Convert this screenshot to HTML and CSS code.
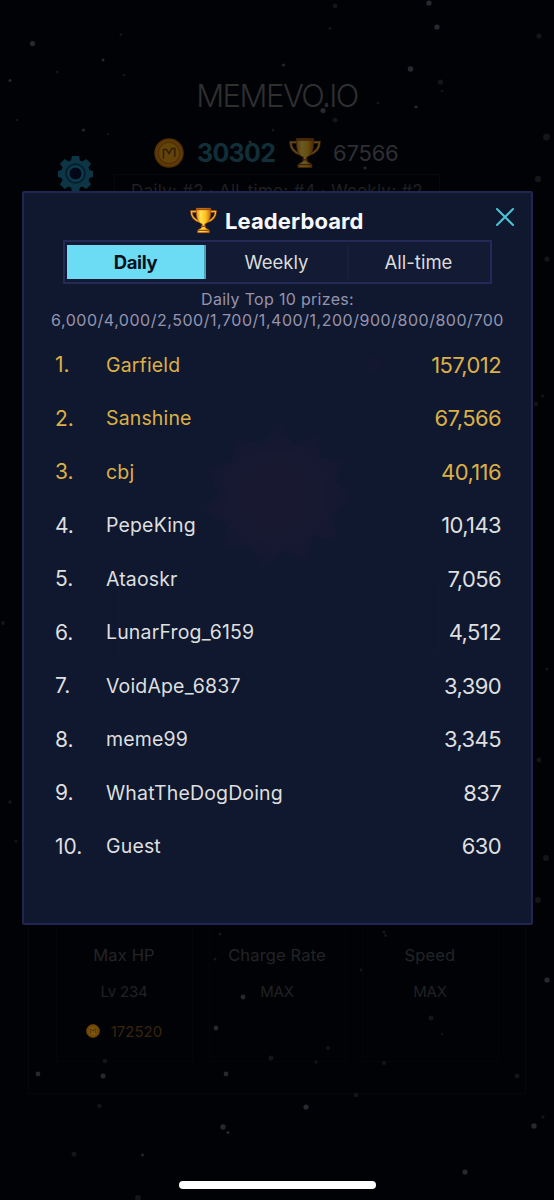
FILE: index.html
```html
<!DOCTYPE html>
<html lang="en">
<head>
<meta charset="utf-8">
<title>MEMEVO.IO</title>
<link rel="stylesheet" href="styles.css">
</head>
<body>
<svg class="symbols" width="0" height="0" aria-hidden="true">
  <defs>
    <linearGradient id="gold" x1="0" x2="1" y1="0" y2="0">
      <stop offset="0" stop-color="#e88a10"/><stop offset=".3" stop-color="#ffe052"/><stop offset=".65" stop-color="#ffc21f"/><stop offset="1" stop-color="#c96508"/>
    </linearGradient>
    <radialGradient id="glow">
      <stop offset="0" stop-color="#191830"/><stop offset=".6" stop-color="#171831"/><stop offset="1" stop-color="#121830"/>
    </radialGradient>
    <symbol id="trophy" viewBox="0 0 30 30">
      <path d="M7 5H1.500C1.500 11 5 14.500 11 16.500M23 5h5.500C28.500 11 25 14.500 19 16.500" fill="none" stroke="#8a3c08" stroke-width="2.800"/>
      <path d="M7 5H1.500C1.500 11 5 14.500 11 16.500M23 5h5.500C28.500 11 25 14.500 19 16.500" fill="none" stroke="#f2b632" stroke-width="1.400"/>
      <path d="M7 1.500h16c0 9-.5 15-6.500 17.500v3c.5 2 4 2.500 5 4v2.500h-13V26c1-1.500 4.500-2 5-4v-3C7.500 16.500 7 10.500 7 1.500z" fill="url(#gold)" stroke="#b65a0a" stroke-width=".8"/>
      <path d="M7.500 2h15v1.500h-15z" fill="#a34b10"/>
      <path d="M12 21.500h6M9 26h12" stroke="#a34b10" stroke-width="1.200"/>
    </symbol>
    <symbol id="coin" viewBox="0 0 30 30">
      <circle cx="15" cy="15" r="14" fill="#f2950a" stroke="#c87408" stroke-width="1.500"/>
      <circle cx="15" cy="15" r="10.800" fill="#f4a812" stroke="#c46c05" stroke-width="1.200"/>
      <path d="M9.500 20.500v-9h3l2.500 4 3-5h2.800v8.500" fill="none" stroke="#824507" stroke-width="1.500"/>
    </symbol>
  </defs>
</svg>
<div class="screen">
  <main class="game">
    <h1 class="logo">MEMEVO.IO</h1>
    <div class="wallet">
      <svg class="wallet-icon"><use href="#coin"/></svg>
      <span class="coins">30302</span>
      <svg class="wallet-icon cup"><use href="#trophy"/></svg>
      <span class="points">67566</span>
    </div>
    <div class="ranks">Daily: #2 · All-time: #4 · Weekly: #2</div>
    <section class="upgrades">
      <div class="upgrade"><h2>Max HP</h2><p>Lv 234</p><div class="price"><svg class="price-icon"><use href="#coin"/></svg><span>172520</span></div></div>
      <div class="upgrade"><h2>Charge Rate</h2><p>MAX</p></div>
      <div class="upgrade"><h2>Speed</h2><p>MAX</p></div>
    </section>
  </main>

  <svg class="gear" viewBox="0 0 36 36" aria-label="Settings">
    <path d="M14.500 1h7l.8 4.400 2.500 1 3.700-2.600 4.700 4.700-2.600 3.700 1 2.500 3.400.8v6l-3.400.8-1 2.500 2.600 3.700-4.700 4.700-3.700-2.600-2.500 1-.8 3.900h-7l-.8-3.900-2.500-1-3.700 2.600-4.700-4.700 2.600-3.700-1-2.500L1 21.500v-6l3.400-.8 1-2.500-2.600-3.700 4.700-4.700 3.700 2.600 2.500-1z" fill="#0c3645"/>
    <circle cx="18" cy="18" r="9.300" fill="#0b3040" stroke="#071c2c" stroke-width="1.500"/>
    <circle cx="18" cy="18" r="6.800" fill="#020818" stroke="#0d3c4f" stroke-width="1.800"/>
  </svg>

  <svg class="stars" viewBox="0 0 554 1200" aria-hidden="true">
    <g fill="#27292e">
      <circle cx="32.500" cy="43.500" r="2.600"/><circle cx="410.500" cy="69" r="2.800"/><circle cx="437" cy="27" r="2.600"/><circle cx="429" cy="3" r="2.600"/><circle cx="323" cy="110.500" r="2.600"/><circle cx="547" cy="980" r="2.600"/><circle cx="223" cy="1127" r="2.700"/><circle cx="306" cy="1107" r="2.600"/><circle cx="534" cy="1126" r="2.700"/><circle cx="465" cy="1172" r="2.600"/><circle cx="38" cy="1074" r="2.400"/><circle cx="103" cy="1076" r="2.500"/><circle cx="226" cy="1074" r="2.400"/><circle cx="216" cy="1028" r="2.400"/><circle cx="243" cy="997" r="2.400"/>
      <circle cx="10" cy="80.500" r="1.500"/><circle cx="103" cy="60" r="1.500"/><circle cx="83.500" cy="130" r="1.500"/><circle cx="283.500" cy="65" r="1.500"/><circle cx="416" cy="107" r="1.600"/><circle cx="326.500" cy="104" r="1.500"/><circle cx="250" cy="142" r="1.500"/><circle cx="365" cy="168" r="1.500"/><circle cx="228" cy="1132.500" r="1.500"/><circle cx="142.500" cy="1155" r="1.400"/>
    </g>
    <g fill="#131519">
      <circle cx="57" cy="72" r="1.500"/><circle cx="124" cy="75" r="1.500"/><circle cx="121" cy="34.500" r="1.500"/><circle cx="330" cy="28.500" r="1.500"/><circle cx="335" cy="6" r="2.400"/><circle cx="440.500" cy="82" r="2.600"/><circle cx="442" cy="91" r="1.300"/><circle cx="378" cy="103" r="1.500"/><circle cx="335" cy="120" r="2.500"/><circle cx="273" cy="130" r="1.500"/><circle cx="539" cy="36" r="2.600"/><circle cx="546.500" cy="137" r="3.500"/><circle cx="538" cy="179" r="3.200"/><circle cx="547" cy="259" r="2.600"/><circle cx="108" cy="134" r="1.300"/><circle cx="17" cy="120" r="1.300"/><circle cx="542.500" cy="396" r="1.600"/><circle cx="536" cy="404" r="2"/><circle cx="3" cy="623" r="2"/><circle cx="547" cy="669" r="1.600"/><circle cx="539" cy="760" r="2.400"/><circle cx="546" cy="858" r="3"/><circle cx="538" cy="900" r="3"/><circle cx="10" cy="802" r="1.800"/><circle cx="16" cy="841" r="1.500"/><circle cx="384" cy="932" r="1.600"/><circle cx="385.500" cy="935.500" r="1.500"/><circle cx="220" cy="934" r="1.600"/><circle cx="215" cy="959" r="1.500"/><circle cx="361" cy="970" r="1.400"/><circle cx="431" cy="1018" r="2.500"/><circle cx="442" cy="1034" r="1.200"/><circle cx="328" cy="1048" r="1.900"/><circle cx="316" cy="1062" r="1.700"/><circle cx="384" cy="1063" r="2"/><circle cx="271" cy="1058" r="2.500"/><circle cx="105" cy="1061" r="2.300"/><circle cx="517" cy="1076" r="2.500"/><circle cx="356" cy="1095" r="2.300"/><circle cx="99.500" cy="1106" r="2.300"/><circle cx="74" cy="1154" r="2.500"/><circle cx="543" cy="1117" r="1.700"/><circle cx="138" cy="1198" r="3"/>
    </g>
  </svg>

  <section class="modal" role="dialog" aria-label="Leaderboard">
    <svg class="backdrop" viewBox="0 0 509 731" aria-hidden="true">
      <path d="M257 232l12 20 25-10 2 22 28 3-14 20 19 19-21 14 6 28-26-5-5 27-23-12-20 18-14-23-26 4 3-26-26-12 18-19-13-24 26-7 5-23 24 5z" fill="url(#glow)"/>
      <circle cx="350" cy="172" r="9" fill="#131830"/>
      <path d="M95 388h320v75H95z" fill="none" stroke="#131b33"/>
    </svg>
    <header class="modal-head">
      <svg class="trophy"><use href="#trophy"/></svg>
      <h2 class="title">Leaderboard</h2>
      <svg class="close" viewBox="0 0 20 20" aria-label="Close"><path d="M2 2l16 16M18 2L2 18"/></svg>
    </header>
    <nav class="tabs">
      <span class="tab active">Daily</span><span class="tab">Weekly</span><span class="tab">All-time</span>
    </nav>
    <p class="prizes"><span class="prize-title">Daily Top 10 prizes:</span><span class="prize-list">6,000/4,000/2,500/1,700/1,400/1,200/900/800/800/700</span></p>
    <div class="board">
      <div class="row top"><span class="rank">1.</span><span class="name">Garfield</span><span class="score">157,012</span></div>
      <div class="row top"><span class="rank">2.</span><span class="name">Sanshine</span><span class="score">67,566</span></div>
      <div class="row top"><span class="rank">3.</span><span class="name">cbj</span><span class="score">40,116</span></div>
      <div class="row"><span class="rank">4.</span><span class="name">PepeKing</span><span class="score">10,143</span></div>
      <div class="row"><span class="rank">5.</span><span class="name">Ataoskr</span><span class="score">7,056</span></div>
      <div class="row"><span class="rank">6.</span><span class="name">LunarFrog_6159</span><span class="score">4,512</span></div>
      <div class="row"><span class="rank">7.</span><span class="name">VoidApe_6837</span><span class="score">3,390</span></div>
      <div class="row"><span class="rank">8.</span><span class="name">meme99</span><span class="score">3,345</span></div>
      <div class="row"><span class="rank">9.</span><span class="name">WhatTheDogDoing</span><span class="score">837</span></div>
      <div class="row"><span class="rank">10.</span><span class="name">Guest</span><span class="score">630</span></div>
    </div>
  </section>
  <div class="home-bar"></div>
</div>
</body>
</html>
```
FILE: styles.css
```css
* { box-sizing: border-box; }
body { margin: 0; background: #010206; font-family: Inter, "Liberation Sans", sans-serif; }
h1, h2, p { margin: 0; font-weight: 400; }
.symbols { position: absolute; }
.screen { position: relative; width: 554px; height: 1200px; overflow: hidden; background: #010206; }
.game { display: flex; flex-direction: column; align-items: center; height: 1200px; padding-top: 76px; }
.logo { height: 40px; line-height: 40px; font-size: 31px; font-weight: 300; color: #2f2f30; letter-spacing: -1.5px; }
.wallet { display: flex; align-items: center; height: 36px; margin-top: 19px; }
.wallet-icon { width: 30px; height: 32px; opacity: .4; }
.wallet-icon.cup { width: 32px; margin-left: 13px; }
.coins { width: 79px; margin-left: 13px; font-size: 25px; font-weight: 700; color: #112f39; letter-spacing: -.7px; }
.points { width: 67px; margin-left: 12px; font-size: 22px; color: #2e2f34; letter-spacing: -.2px; }
.ranks { width: 326px; height: 42px; margin-top: 3px; border: 1px solid #06080e; line-height: 32px; text-align: center; font-size: 17px; color: #1f2023; letter-spacing: .25px; white-space: nowrap; }
.upgrades { display: flex; gap: 16px; justify-content: center; width: 498px; height: 394px; margin-top: 484px; padding-top: 225px; border: 1px solid #05070c; }
.upgrade { display: flex; flex-direction: column; align-items: center; width: 137px; height: 136px; padding-top: 17px; border: 1px solid #030509; border-top: 0; }
.upgrade h2 { height: 24px; line-height: 24px; font-size: 16.500px; color: #232427; letter-spacing: .15px; white-space: nowrap; }
.upgrade p { height: 20px; margin-top: 15px; line-height: 20px; font-size: 15px; color: #202124; letter-spacing: -.2px; }
.price { display: flex; align-items: center; gap: 11px; height: 20px; margin-top: 19px; color: #38250b; font-size: 15px; }
.price-icon { width: 14px; height: 14px; opacity: .5; }
.gear { position: absolute; left: 57px; top: 155px; width: 37px; height: 37px; }
.stars { position: absolute; inset: 0; width: 554px; height: 1200px; }
.modal { position: absolute; left: 22px; top: 191px; width: 511px; height: 734px; border: 2px solid #20264f; border-radius: 2px; background: #10182f; }
.backdrop { position: absolute; left: 0; top: 0; width: 509px; height: 731px; }
.modal-head { position: relative; display: flex; align-items: center; height: 47px; padding: 7px 16px 0 166px; }
.trophy { width: 27px; height: 27px; }
.title { margin-left: 8px; font-size: 22px; font-weight: 700; color: #f7f8fa; line-height: 30px; margin-top: 1px; letter-spacing: .1px; }
.close { width: 20px; height: 20px; margin-left: auto; margin-top: -6px; fill: none; stroke: #49c5d5; stroke-width: 2; stroke-linecap: round; }
.tabs { position: relative; display: grid; grid-template-columns: 139px 143px 1fr; width: 429px; height: 44px; margin-left: 39px; padding: 3px 2px; border: 2px solid #232a56; background: #121a34; }
.tab { display: flex; align-items: center; justify-content: center; font-size: 18.500px; color: #dcdcdc; border-right: 2px solid #182040; }
.tab:last-child { border-right: 0; }
.tab.active { background: #6bdcf4; color: #0a111d; font-weight: 700; letter-spacing: -.4px; border-right: 2px solid #4ba3b9; }
.prizes { position: relative; display: flex; flex-direction: column; align-items: center; padding-top: 5px; color: #9594ae; font-size: 16px; line-height: 21px; white-space: nowrap; }
.prize-title { letter-spacing: .3px; }
.prize-list { letter-spacing: .53px; }
.board { position: relative; padding: 7px 30px 0 31px; }
.row { display: flex; align-items: center; height: 53.500px; color: #dedfdf; font-size: 19.500px; }
.row.top { color: #dcb046; }
.name { letter-spacing: .15px; }
.rank { width: 51px; font-size: 21px; }
.score { margin-left: auto; font-size: 22px; letter-spacing: -.6px; }
.home-bar { position: absolute; left: 179px; top: 1181px; width: 197px; height: 8px; border-radius: 4px; background: #fff; }
```
